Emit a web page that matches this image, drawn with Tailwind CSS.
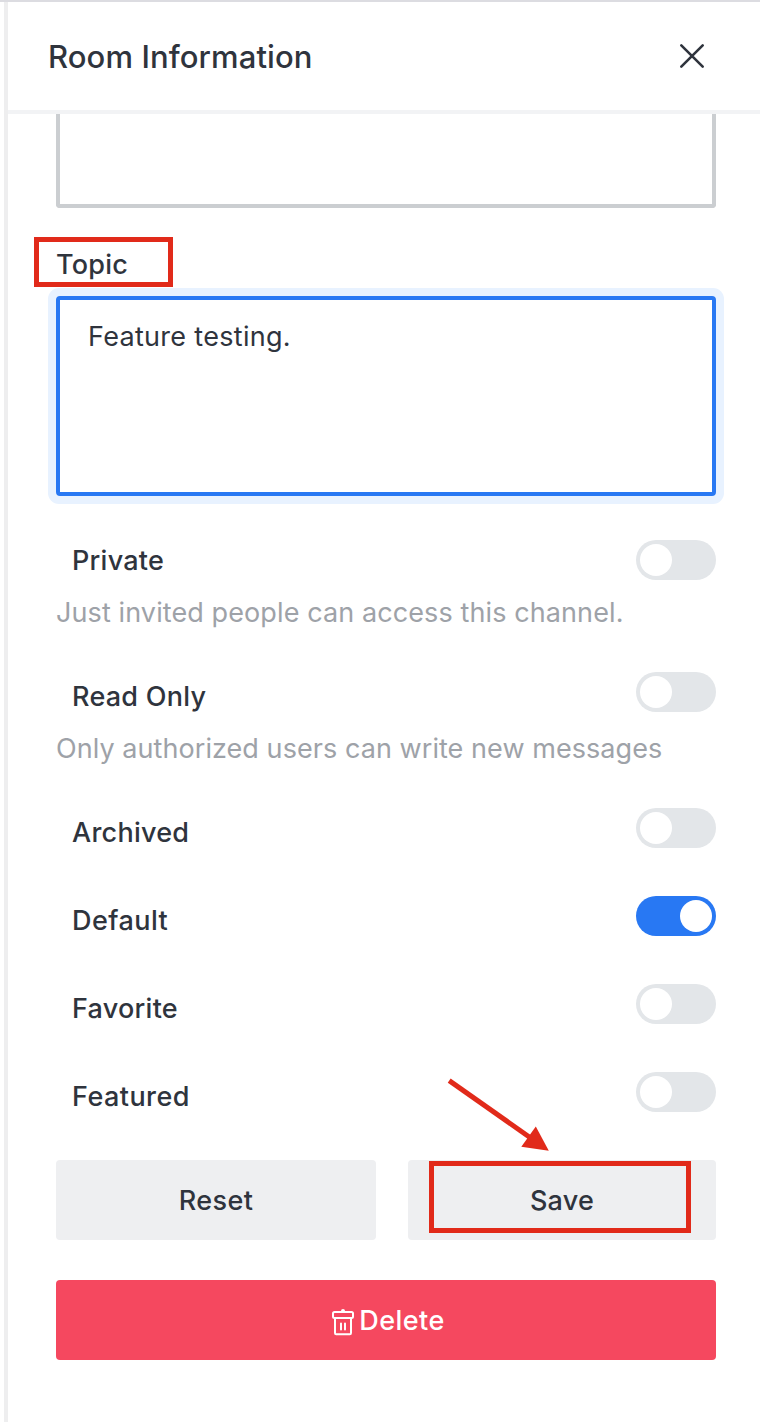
<!DOCTYPE html>
<html lang="en">
<head>
<meta charset="utf-8">
<title>Room Information</title>
<script src="https://cdn.jsdelivr.net/npm/@tailwindcss/browser@4"></script>
</head>
<body class="bg-white">
<div class="relative flex h-[1422px] w-[760px] flex-col overflow-hidden border-t-2 border-[#dcdce1] bg-white pl-1 font-['Inter',sans-serif] text-[27px] leading-[41px] font-medium tracking-[0.25px] text-[#2f343d]">
  <aside class="flex grow flex-col border-l-4 border-[#eeeeef]">
    <header class="flex h-28 shrink-0 items-center justify-between border-b-4 border-[#f2f3f5] pr-[54px] pl-10">
      <h1 class="text-[31px] tracking-[0.1px]">Room Information</h1>
      <svg class="size-7" viewBox="0 0 28 28" fill="none" stroke="#2f343d" stroke-width="2.6" stroke-linecap="round"><path d="M3.3 3.3 24.7 24.7M24.7 3.3 3.3 24.7"/></svg>
    </header>
    <main class="flex flex-col pr-11 pl-12">
      <div class="h-[94px] rounded-b-[4px] border-4 border-t-0 border-[#cbced1]"></div>
      <label class="mt-9 h-10">Topic</label>
      <div class="mt-3 h-[200px] rounded-[4px] border-4 border-[#2878f3] px-7 py-4 font-normal tracking-[0.3px] shadow-[0_0_0_8px_#e8f2ff]">Feature testing.</div>

      <div class="mt-11 flex h-10 justify-between pl-4"><span>Private</span><span class="flex h-10 w-20 rounded-full bg-[#e3e6e9] p-1"><i class="size-8 rounded-full bg-white"></i></span></div>
      <p class="mt-3 h-10 font-normal tracking-[0.1px] text-[#9ea2a8]">Just invited people can access this channel.</p>

      <div class="mt-10 flex h-11 justify-between pl-4"><span class="pt-1">Read Only</span><span class="flex h-10 w-20 rounded-full bg-[#e3e6e9] p-1"><i class="size-8 rounded-full bg-white"></i></span></div>
      <p class="mt-3 h-10 font-normal tracking-[0.06px] text-[#9ea2a8]">Only authorized users can write new messages</p>

      <div class="mt-10 flex flex-col gap-11">
        <div class="flex h-11 justify-between pl-4"><span class="pt-1">Archived</span><span class="flex h-10 w-20 rounded-full bg-[#e3e6e9] p-1"><i class="size-8 rounded-full bg-white"></i></span></div>
        <div class="flex h-11 justify-between pl-4"><span class="pt-1 tracking-[0.45px]">Default</span><span class="flex h-10 w-20 justify-end rounded-full bg-[#2878f3] p-1"><i class="size-8 rounded-full bg-white"></i></span></div>
        <div class="flex h-11 justify-between pl-4"><span class="pt-1">Favorite</span><span class="flex h-10 w-20 rounded-full bg-[#e3e6e9] p-1"><i class="size-8 rounded-full bg-white"></i></span></div>
        <div class="flex h-11 justify-between pl-4"><span class="pt-1 tracking-[0.45px]">Featured</span><span class="flex h-10 w-20 rounded-full bg-[#e3e6e9] p-1"><i class="size-8 rounded-full bg-white"></i></span></div>
      </div>

      <div class="mt-11 flex gap-8">
        <button class="h-20 w-80 rounded-[4px] bg-[#eeeff1] tracking-[0.4px]">Reset</button>
        <button class="h-20 w-[308px] rounded-[4px] bg-[#eeeff1]">Save</button>
      </div>
      <button class="mt-10 flex h-20 items-center justify-center rounded-[4px] bg-[#f5485f] pl-1 tracking-[0.45px] text-white">
        <svg class="mt-1 mr-1 h-7 w-6" viewBox="0 0 24 28" fill="none" stroke="#fff" stroke-width="2" stroke-linecap="round"><rect x="2" y="4" width="20" height="6" rx="1.5"/><path d="M4 10v15a1.2 1.2 0 0 0 1.2 1.2h13.6a1.2 1.2 0 0 0 1.2-1.2V10M10 15.5v6M14 15.5v6"/><circle cx="12" cy="3" r="2" fill="#fff" stroke="none"/></svg>
        <span>Delete</span>
      </button>
    </main>
  </aside>

  <!-- Annotations over the form -->
  <div class="absolute top-[235px] left-[34px] h-[50px] w-[139px] border-5 border-[#e12a1a]"></div>
  <div class="absolute top-[1159px] left-[429px] h-[72px] w-[262px] border-5 border-[#e12a1a]"></div>
  <svg class="absolute top-[1068px] left-[440px]" width="120" height="90" viewBox="440 1070 120 90"><path d="M449.2 1080.6 530 1137.5" stroke="#e12a1a" stroke-width="5"/><path d="M535.8 1126.6 548.8 1150.8 521.3 1146.8Z" fill="#e12a1a"/></svg>
</div>
</body>
</html>
